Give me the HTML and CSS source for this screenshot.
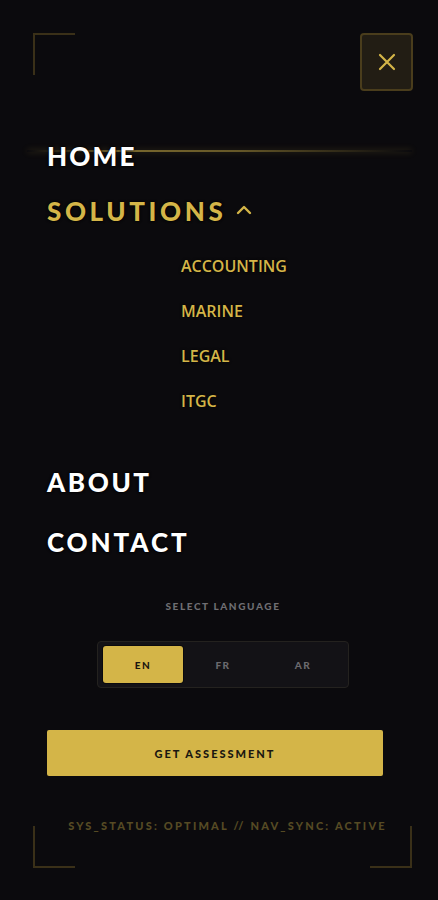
FILE: index.html
```html
<!DOCTYPE html>
<html lang="en">
<head>
<meta charset="utf-8">
<title>Menu</title>
<link rel="stylesheet" href="styles.css">
</head>
<body>
<div class="screen">
  <span class="corner corner-tl"></span>
  <span class="corner corner-bl"></span>
  <span class="corner corner-br"></span>

  <header class="top">
    <button class="close" aria-label="Close menu">
      <svg width="20" height="20" viewBox="0 0 20 20"><path d="M3 3 L17 17 M17 3 L3 17" stroke="#d4b548" stroke-width="2.2" stroke-linecap="round" fill="none"/></svg>
    </button>
  </header>

  <nav class="nav">
    <a class="nav-item home">HOME</a>
    <a class="nav-item gold">SOLUTIONS
      <svg class="chev" width="16" height="10" viewBox="0 0 16 10"><path d="M2 8 L8 2 L14 8" stroke="#d4b548" stroke-width="2.4" fill="none" stroke-linecap="round" stroke-linejoin="round"/></svg>
    </a>
    <ul class="sub">
      <li>ACCOUNTING</li>
      <li>MARINE</li>
      <li>LEGAL</li>
      <li>ITGC</li>
    </ul>
    <a class="nav-item about">ABOUT</a>
    <a class="nav-item contact">CONTACT</a>
  </nav>

  <section class="lang">
    <div class="lang-label">SELECT LANGUAGE</div>
    <div class="lang-toggle">
      <span class="lang-opt active">EN</span>
      <span class="lang-opt">FR</span>
      <span class="lang-opt">AR</span>
    </div>
  </section>

  <div class="cta-wrap">
    <button class="cta">GET ASSESSMENT</button>
  </div>

  <div class="status">SYS_STATUS: OPTIMAL // NAV_SYNC: ACTIVE</div>
</div>
</body>
</html>
```

FILE: styles.css
```css
* { box-sizing: border-box; }
html, body {
  margin: 0;
  padding: 0;
  background: #0b0a0d;
}
.screen {
  position: relative;
  width: 438px;
  height: 900px;
  background: #0b0a0d;
  font-family: "Open Sans", "Liberation Sans", sans-serif;
  overflow: hidden;
}
.corner {
  position: absolute;
  width: 42px;
  height: 42px;
  border-color: #3a3018;
  border-style: solid;
  border-width: 0;
}
.corner-tl { left: 33px; top: 33px; border-top-width: 2px; border-left-width: 2px; }
.corner-bl { left: 33px; top: 826px; border-bottom-width: 2px; border-left-width: 2px; }
.corner-br { left: 370px; top: 826px; border-bottom-width: 2px; border-right-width: 2px; }

.top {
  display: flex;
  justify-content: flex-end;
  padding: 33px 25px 0 0;
}
.close {
  width: 53px;
  height: 58px;
  border: 2px solid #4a3d1c;
  border-radius: 4px;
  background: #221d14;
  display: flex;
  align-items: center;
  justify-content: center;
  padding: 0;
}

.nav {
  display: flex;
  flex-direction: column;
  align-items: flex-start;
  padding-left: 47px;
  margin-top: 45px;
}
.nav-item {
  position: relative;
  display: flex;
  align-items: center;
  height: 40px;
  font-family: "Lato", sans-serif;
  font-weight: 900;
  font-size: 26px;
  letter-spacing: 2.6px;
  color: #ffffff;
  text-shadow: 0 0 3px #000, 0 0 2px #000;
}
.nav-item.gold { color: #d4b548; margin-top: 15px; letter-spacing: 3.6px; }
.chev { margin-left: 10px; margin-top: -2px; }
.home { z-index: 1; letter-spacing: 2.2px; }
.contact { letter-spacing: 2.9px; }
.home::before {
  content: "";
  position: absolute;
  left: -20px;
  top: 14px;
  width: 385px;
  height: 2px;
  background: linear-gradient(90deg, rgba(212,181,72,0) 0%, rgba(212,181,72,0.55) 25%, rgba(212,181,72,0.45) 55%, rgba(212,181,72,0) 100%);
  box-shadow: 0 0 6px rgba(212,181,72,0.25);
  z-index: -1;
}

.sub {
  list-style: none;
  margin: 23px 0 0 134px;
  padding: 0;
  display: flex;
  flex-direction: column;
  gap: 21px;
}
.sub li {
  height: 24px;
  line-height: 24px;
  font-family: "Open Sans", sans-serif;
  font-weight: 600;
  font-size: 16px;
  color: #d4b548;
  text-shadow: 0 0 3px #000;
}
.about { margin-top: 49px; }
.contact { margin-top: 20px; }

.lang {
  display: flex;
  flex-direction: column;
  align-items: center;
  margin-top: 37px;
  padding-left: 8px;
}
.lang-label {
  font-family: "Lato", sans-serif;
  font-weight: 900;
  font-size: 10px;
  letter-spacing: 1.6px;
  color: #6f6e72;
  height: 14px;
  line-height: 14px;
}
.lang-toggle {
  margin-top: 28px;
  width: 252px;
  height: 47px;
  padding: 4px 5px;
  background: #131216;
  border: 1px solid #24221f;
  border-radius: 4px;
  display: grid;
  grid-template-columns: repeat(3, 1fr);
}
.lang-opt {
  display: flex;
  align-items: center;
  justify-content: center;
  font-family: "Lato", sans-serif;
  font-weight: 900;
  font-size: 10px;
  letter-spacing: 1.5px;
  color: #6b6a6e;
  border-radius: 3px;
}
.lang-opt.active {
  background: #d4b548;
  color: #1a1710;
  box-shadow: 0 0 0 1px #0b0a0d;
}

.cta-wrap {
  padding: 0 55px 0 47px;
  margin-top: 42px;
}
.cta {
  width: 336px;
  height: 46px;
  border: none;
  border-radius: 2px;
  background: #d4b548;
  color: #1a1710;
  font-family: "Lato", sans-serif;
  font-weight: 900;
  font-size: 11px;
  letter-spacing: 2px;
  padding: 0;
}

.status {
  margin-top: 43px;
  text-align: center;
  padding-left: 17px;
  font-family: "Lato", sans-serif;
  font-weight: 900;
  font-size: 11px;
  letter-spacing: 2.2px;
  color: #564a24;
  height: 14px;
  line-height: 14px;
}
```
